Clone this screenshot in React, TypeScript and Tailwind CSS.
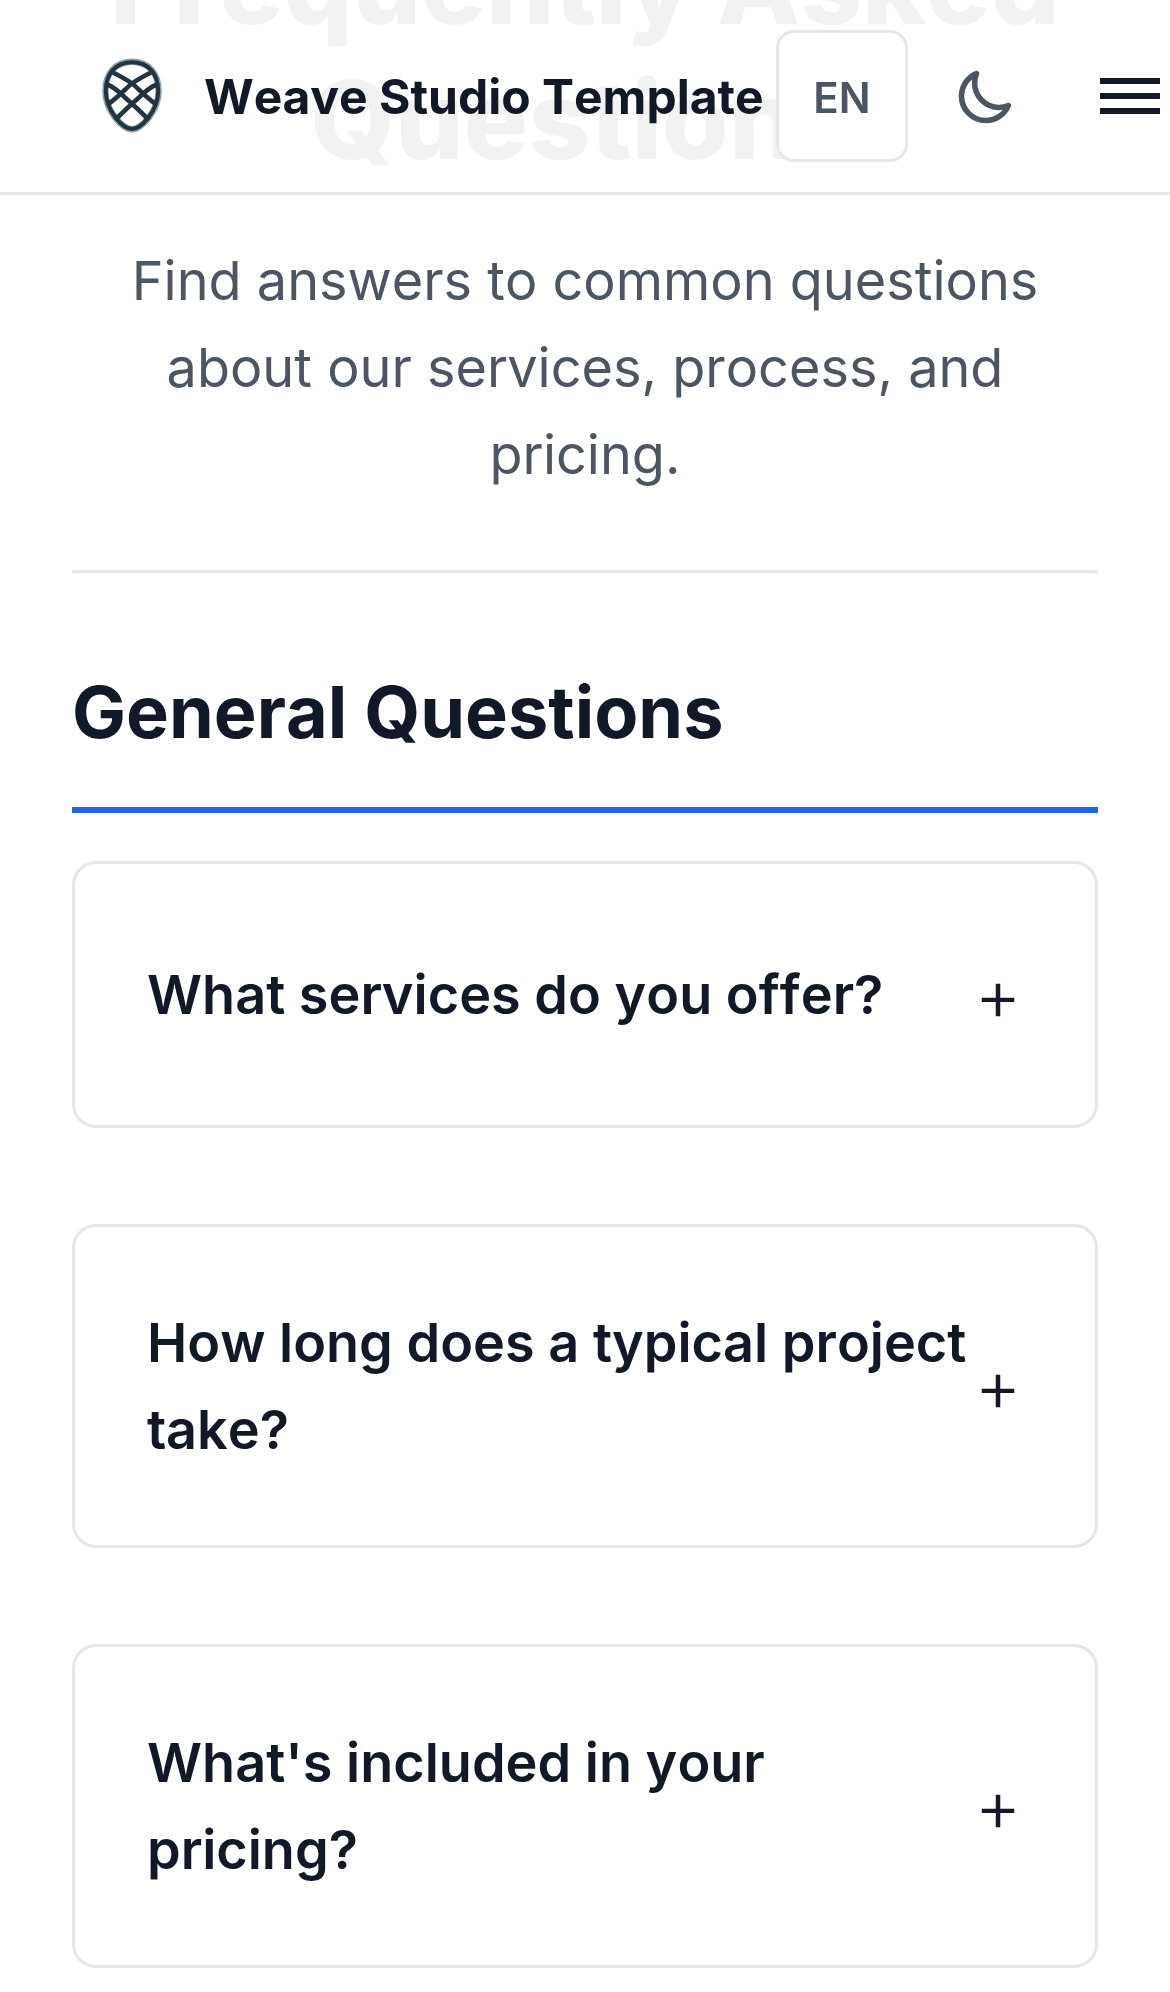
const faqs = [
  { q: "What services do you offer?", h: "h-[267px]" },
  { q: "How long does a typical project take?", h: "h-[324px]" },
  { q: "What's included in your pricing?", h: "h-[324px]" },
];

function Logo() {
  return (
    <svg width="144" height="96" viewBox="60 48 144 96" fill="none" stroke="#22343f" strokeWidth="4.6" className="-ml-3 shrink-0">
      <path stroke="#8fa0aa" strokeWidth="6.5" d="M132 61.8C148 61.8 158.6 73 158.6 91C158.6 111 141 129.3 132 129.3C123 129.3 105.400 111 105.400 91C105.400 73 116 61.800 132 61.800Z" />
      <path strokeWidth="4" d="M132 62.2C148 62.2 158.2 73 158.2 91C158.2 111 141 129 132 129C123 129 105.8 111 105.8 91C105.8 73 116 62.2 132 62.2Z" />
      <path d="M110 71C118 75 126 79 132 83.5C138 88 144 96 157 105M107 84.5C113 86.5 118 91 121.7 94.5C128 100 139 110 149 120M154 71C146 75 138 79 132 83.5C126 88 120 96 107 105M157 84.5C151 86.5 146 91 142.3 94.5C136 100 125 110 115 120" />
    </svg>
  );
}

function Header() {
  return (
    <header className="fixed inset-x-0 top-0 z-10 flex h-[195px] items-center border-b-[3px] border-[#e5e7eb] bg-white/95 pl-[72px]">
      <Logo />
      <span className="w-[572px] shrink-0 pt-[2px] text-[48px] font-bold leading-[72px] whitespace-nowrap text-[#111827]">Weave Studio Template</span>
      <button className="flex size-[132px] shrink-0 items-center justify-center rounded-[18px] border-[3px] border-[#e5e7eb] bg-white pt-[2px] text-[42px] font-semibold text-[#4b5563]">EN</button>
      <button className="mt-[3px] ml-[46px] shrink-0" aria-label="Theme">
        <svg width="60" height="60" viewBox="0 0 24 24" fill="none" stroke="#4b5563" strokeWidth="2.2" strokeLinecap="round" strokeLinejoin="round">
          <path d="M21.752 15.002A9.72 9.72 0 0 1 18 15.75c-5.385 0-9.75-4.365-9.75-9.75 0-1.33.266-2.597.748-3.752A9.753 9.753 0 0 0 3 11.25C3 16.635 7.365 21 12.75 21a9.753 9.753 0 0 0 9.002-5.998Z" />
        </svg>
      </button>
      <button className="ml-[86px] flex w-[60px] shrink-0 flex-col gap-[9px]" aria-label="Menu">
        <span className="h-[6px] bg-[#111827]" />
        <span className="h-[6px] bg-[#111827]" />
        <span className="h-[6px] bg-[#111827]" />
      </button>
    </header>
  );
}

export default function App() {
  return (
    <div className="h-[1992px] w-[1170px] overflow-hidden bg-white font-['Inter',sans-serif] text-[#111827] [font-kerning:none]">
      <Header />
      <main className="flow-root px-[72px]">
        <section className="flow-root h-[573px] border-b-[3px] border-[#e5e7eb] text-center">
          <h1 className="-mt-[83px] text-[108px] leading-[135px] font-extrabold text-black">Frequently Asked Questions</h1>
          <p className="mx-auto mt-[50px] w-[928px] text-[54px] leading-[87px] text-[#4b5563]">
            Find answers to common questions about our services, process, and pricing.
          </p>
        </section>
        <h2 className="mt-[96px] h-[144px] border-b-[6px] border-[#2563eb] text-[72px] leading-[86px] font-bold">General Questions</h2>
        <div className="mt-[48px] flex flex-col gap-[96px]">
          {faqs.map(({ q, h }) => (
            <article key={q} className={`flex items-center justify-between rounded-[24px] border-[3px] border-[#e5e7eb] pr-[72px] pl-[72px] ${h}`}>
              <h3 className="text-[54px] leading-[87px] font-semibold">{q}</h3>
              <span className="w-[50px] shrink-0 pb-[2px] text-center text-[72px] leading-[72px] font-light">+</span>
            </article>
          ))}
        </div>
      </main>
    </div>
  );
}
